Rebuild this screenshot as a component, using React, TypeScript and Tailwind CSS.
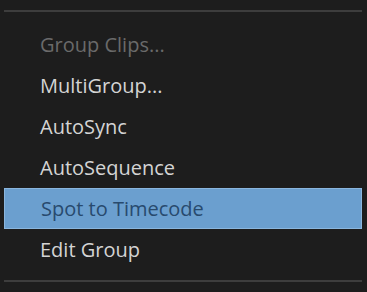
import React from 'react';

const items = [
    { label: 'Group Clips...', disabled: true },
    { label: 'MultiGroup...' },
    { label: 'AutoSync' },
    { label: 'AutoSequence' },
    { label: 'Spot to Timecode', active: true },
    { label: 'Edit Group' },
];

export default function App() {
    return (
        <div className="w-[367px] h-[292px] bg-[#1d1d1d] overflow-hidden pt-[10px] pl-[4px] pr-[5px]" style={{ fontFamily: '"Open Sans", sans-serif' }}>
            <div className="h-[2px] bg-[#3d3d3d]" />
            <div className="pt-[12px] pb-[10px]">
                {items.map((it) => (
                    <div
                        key={it.label}
                        className={
                            'h-[41px] flex items-center pl-[36px] text-[20px] font-medium ' +
                            (it.active
                                ? 'bg-[#6b9fcf] text-[#284a6e] border border-[#8ab6de]'
                                : it.disabled
                                  ? 'text-[#6a6a6a]'
                                  : 'text-[#d4d4d4]')
                        }
                    >
                        {it.label}
                    </div>
                ))}
            </div>
            <div className="h-[2px] bg-[#3d3d3d]" />
        </div>
    );
}
